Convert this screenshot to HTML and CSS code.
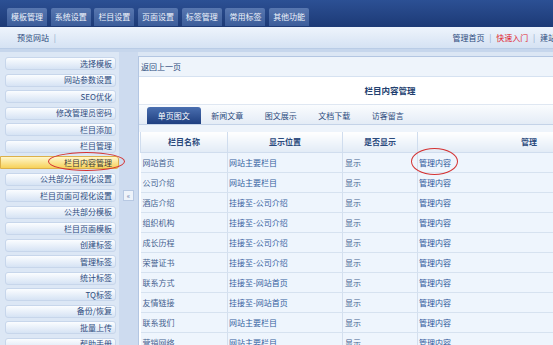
FILE: index.html
```html
<!DOCTYPE html>
<html lang="zh-CN">
<head>
<meta charset="utf-8">
<title>栏目内容管理</title>
<link rel="stylesheet" href="styles.css">
</head>
<body>
<div class="page">
  <div class="topbar">
    <span class="ttab">模板管理</span>
    <span class="ttab">系统设置</span>
    <span class="ttab">栏目设置</span>
    <span class="ttab">页面设置</span>
    <span class="ttab">标签管理</span>
    <span class="ttab">常用标签</span>
    <span class="ttab">其他功能</span>
  </div>
  <div class="subbar">
    <div class="sub-left">预览网站 <span class="sep">|</span></div>
    <div class="sub-right">管理首页 <span class="sep">|</span> <span class="red">快速入门</span> <span class="sep">|</span> 建站指南</div>
  </div>
  <div class="strip"></div>
  <div class="main">
    <div class="sidebar">
      <div class="item">选择模板</div>
      <div class="item">网站参数设置</div>
      <div class="item">SEO优化</div>
      <div class="item">修改管理员密码</div>
      <div class="item">栏目添加</div>
      <div class="item">栏目管理</div>
      <div class="item active">栏目内容管理</div>
      <div class="item">公共部分可视化设置</div>
      <div class="item">栏目页面可视化设置</div>
      <div class="item">公共部分模板</div>
      <div class="item">栏目页面模板</div>
      <div class="item">创建标签</div>
      <div class="item">管理标签</div>
      <div class="item">统计标签</div>
      <div class="item">TQ标签</div>
      <div class="item">备份/恢复</div>
      <div class="item">批量上传</div>
      <div class="item">帮助手册</div>
    </div>
    <div class="toggle"><span class="tbtn">«</span></div>
    <div class="content">
      <div class="back">返回上一页</div>
      <div class="title">栏目内容管理</div>
      <div class="tabs">
        <span class="tab on">单页图文</span>
        <span class="tab">新闻文章</span>
        <span class="tab">图文展示</span>
        <span class="tab">文档下载</span>
        <span class="tab">访客留言</span>
      </div>
      <div class="gap"></div>
      <table class="grid">
        <colgroup><col class="c1"><col class="c2"><col class="c3"><col class="c4"></colgroup>
        <thead>
          <tr><th>栏目名称</th><th>显示位置</th><th>是否显示</th><th>管理</th></tr>
        </thead>
        <tbody>
          <tr><td>网站首页</td><td>网站主要栏目</td><td>显示</td><td class="lnk">管理内容</td></tr>
          <tr><td>公司介绍</td><td>网站主要栏目</td><td>显示</td><td class="lnk">管理内容</td></tr>
          <tr><td>酒店介绍</td><td>挂接至-公司介绍</td><td>显示</td><td class="lnk">管理内容</td></tr>
          <tr><td>组织机构</td><td>挂接至-公司介绍</td><td>显示</td><td class="lnk">管理内容</td></tr>
          <tr><td>成长历程</td><td>挂接至-公司介绍</td><td>显示</td><td class="lnk">管理内容</td></tr>
          <tr><td>荣誉证书</td><td>挂接至-公司介绍</td><td>显示</td><td class="lnk">管理内容</td></tr>
          <tr><td>联系方式</td><td>挂接至-网站首页</td><td>显示</td><td class="lnk">管理内容</td></tr>
          <tr><td>友情链接</td><td>挂接至-网站首页</td><td>显示</td><td class="lnk">管理内容</td></tr>
          <tr><td>联系我们</td><td>网站主要栏目</td><td>显示</td><td class="lnk">管理内容</td></tr>
          <tr><td>营销网络</td><td>网站主要栏目</td><td>显示</td><td class="lnk">管理内容</td></tr>
        </tbody>
      </table>
    </div>
  </div>
  <div class="ring ring-side"></div>
  <div class="ring ring-table"></div>
</div>
</body>
</html>
```
FILE: styles.css
```css
html, body {
  margin: 0;
  padding: 0;
  width: 553px;
  height: 345px;
  overflow: hidden;
  background: #dbe6f4;
}
.page {
  position: relative;
  width: 640px;
  height: 345px;
  font-family: "Noto Sans CJK SC", "DejaVu Sans", sans-serif;
  font-size: 8px;
  line-height: 1;
  color: #3b5a88;
}
.topbar {
  height: 27px;
  box-sizing: border-box;
  padding: 8px 0 0 7px;
  display: flex;
  gap: 3.7px;
  background: linear-gradient(#2c5094, #1d3a76);
}
.ttab {
  width: 40px;
  height: 18px;
  display: flex;
  align-items: center;
  justify-content: center;
  color: #eef3fb;
  background: linear-gradient(#5877b0, #3c5d9a);
  border-radius: 2px 2px 0 0;
}
.subbar {
  height: 21px;
  display: flex;
  align-items: center;
  background: linear-gradient(#eef4fc, #d5e2f3);
  border-bottom: 1px solid #b9cce6;
  color: #2b4a7c;
}
.sub-left { padding-left: 17px; }
.sub-right { margin-left: auto; padding-right: 68px; }
.sep { color: #8fa6c8; margin: 0 3px; }
.red { color: #e0202a; }
.strip {
  height: 3px;
  background: #c6d6ec;
}
.main {
  display: flex;
  height: 293px;
  overflow: hidden;
}
.sidebar {
  width: 119px;
  flex: none;
  box-sizing: border-box;
  padding-top: 5px;
  display: flex;
  flex-direction: column;
  gap: 3.5px;
  background: #dce7f5;
}
.item {
  flex: none;
  height: 13px;
  margin-left: 5px;
  width: 111px;
  box-sizing: border-box;
  padding-right: 3px;
  display: flex;
  align-items: center;
  justify-content: flex-end;
  background: linear-gradient(#fbfdff, #d6e3f4);
  border: 1px solid #c7d6eb;
  border-radius: 3px;
  color: #2d4b7e;
}
.item.active {
  margin-left: 0;
  width: 119px;
  padding-right: 6px;
  background: linear-gradient(#fff7cc, #f7d25a);
  border-color: #dcb04a;
  border-radius: 0 3px 3px 0;
  color: #3a3a3a;
}
.toggle {
  width: 19px;
  flex: none;
  background: #cddbef;
  display: flex;
  align-items: center;
  justify-content: center;
  padding-bottom: 6px;
  box-sizing: border-box;
}
.tbtn {
  width: 9px;
  height: 9px;
  display: flex;
  align-items: center;
  justify-content: center;
  background: #eef3fa;
  border: 1px solid #b7c8e2;
  color: #6c82aa;
  font-size: 7px;
}
.content {
  width: 502px;
  flex: none;
  margin-top: 4px;
  background: #fff;
  border-left: 1px solid #b3c6e2;
  border-top: 1px solid #b3c6e2;
}
.back {
  height: 20px;
  box-sizing: border-box;
  padding-left: 2px;
  display: flex;
  align-items: center;
  background: #eef4fb;
  border-bottom: 1px solid #d6e2f1;
  color: #2b4a7c;
}
.title {
  height: 27px;
  display: flex;
  align-items: center;
  justify-content: center;
  font-weight: bold;
  font-size: 8.5px;
  color: #233f6f;
  border-bottom: 1px solid #dfe7f2;
}
.tabs {
  height: 20px;
  box-sizing: border-box;
  padding: 2px 0 0 8px;
  display: flex;
  align-items: stretch;
  background: linear-gradient(#fafcfe, #e4ecf6);
  border-bottom: 1px solid #c4d3e8;
}
.tab {
  width: 53.5px;
  display: flex;
  align-items: center;
  justify-content: center;
  color: #2b4a7c;
}
.tab.on {
  color: #fff;
  background: linear-gradient(#4a6fb0, #1f3f80);
  border-radius: 3px 3px 0 0;
}
.gap {
  height: 7px;
  background: #eef4fb;
}
.grid {
  width: 500px;
  margin-left: 1px;
  border-collapse: collapse;
  table-layout: fixed;
}
.c1 { width: 87px; }
.c2 { width: 115px; }
.c3 { width: 75px; }
.c4 { width: 223px; }
.grid th {
  height: 20px;
  padding: 0;
  font-weight: bold;
  color: #2b4a7c;
  background: linear-gradient(#ffffff, #e2ebf6);
  border: 1px solid #d0ddee;
  border-top: none;
}
.grid td {
  height: 19px;
  padding: 0 0 0 2px;
  background: #eef5fd;
  border-right: 1px solid #d3dfee;
  border-bottom: 1px solid #d6e2f0;
  color: #45628f;
  white-space: nowrap;
}
.grid td:nth-child(2) { color: #3560a0; padding-left: 1px; }
.grid td.lnk { color: #2d5599; padding-left: 1px; }
.ring {
  position: absolute;
  border: 1px solid #d43232;
  border-radius: 50%;
}
.ring-side { left: 48px; top: 152px; width: 75px; height: 17px; }
.ring-table { left: 411px; top: 148px; width: 45px; height: 25px; }
```
